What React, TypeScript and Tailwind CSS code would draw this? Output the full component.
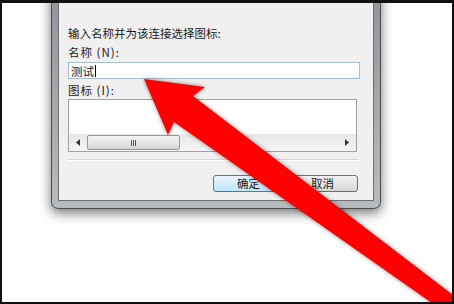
import React from "react";

const font = "font-['Noto_Sans_CJK_SC','Noto_Sans',sans-serif]";

const Arrow: React.FC = () => (
  <svg
    className="absolute inset-0 drop-shadow-[0_0_2px_rgba(0,0,0,0.45)]"
    width={454}
    height={304}
    viewBox="0 0 454 304"
  >
    <polygon
      points="144,79 205,87 193,96 470,308 439,308 174,122 168,135"
      fill="#ff0000"
    />
  </svg>
);

const ScrollBar: React.FC = () => (
  <div className="flex h-[17px] items-center bg-gradient-to-b from-[#e8e8e8] to-[#f4f4f4]">
    <div className="flex w-[18px] justify-center">
      <svg width="4" height="7" viewBox="0 0 4 7">
        <polygon points="4,0 4,7 0,3.5" fill="#333" />
      </svg>
    </div>
    <div className="flex h-[15px] w-[93px] items-center justify-center rounded-[2px] border border-[#979797] bg-gradient-to-b from-[#f3f3f3] via-[#e6e6e6] to-[#d4d4d4]">
      <div className="flex gap-[1px]">
        <span className="h-[6px] w-px bg-[#555]" />
        <span className="h-[6px] w-px bg-[#555]" />
        <span className="h-[6px] w-px bg-[#555]" />
      </div>
    </div>
    <div className="flex-grow" />
    <div className="flex w-[18px] justify-center">
      <svg width="4" height="7" viewBox="0 0 4 7">
        <polygon points="0,0 0,7 4,3.5" fill="#333" />
      </svg>
    </div>
  </div>
);

const App: React.FC = () => {
  return (
    <div className={`relative h-[304px] w-[454px] overflow-hidden bg-white ${font}`}>
      {/* dialog, its top is outside the picture */}
      <div className="ml-[51px] mt-[-9px] w-[330px] rounded-b-[7px] border border-t-0 border-[#4d4d4d] bg-gradient-to-b from-[#8f959b] to-[#b8bbbe] px-[6px] pb-[7px] shadow-[0_4px_12px_rgba(0,0,0,0.55)]">
        <div className="flex flex-col border border-t-0 border-[#707070] bg-[#f0f0f0] pl-[9px] text-[11.5px] leading-[16px] text-[#1a1a1a]">
          <div className="ml-[40px] mt-[-3px] text-[#9a9a9a]">新建连接名称</div>
          <div className="mt-[21px]">输入名称并为该连接选择图标:</div>
          <div className="mt-[3px] tracking-[1px]">名称 (N):</div>
          <div className="mt-[2px] flex h-[17px] w-[292px] items-center border border-[#abbdcd] bg-[#fbfdff] pl-[2px]">
            <span>测试</span>
            <span className="ml-px h-[12px] w-px bg-black" />
          </div>
          <div className="mt-[3px] tracking-[1px]">图标 (I):</div>
          <div className="mt-px flex h-[53px] w-[289px] flex-col border border-[#a0a0a0] bg-white">
            <div className="flex-grow" />
            <ScrollBar />
          </div>
          <div className="mt-[7px] h-[2px] w-[290px] border-t border-b border-t-[#d5d5d5] border-b-white" />
          <div className="mt-[14px] mb-[8px] flex w-[290px] justify-end gap-[3px]">
            <button className="h-[17px] w-[71px] rounded-[3px] border border-[#3c7fb1] bg-gradient-to-b from-[#eaf6fd] to-[#bee6fd] text-[11.5px] leading-[15px] text-[#1a1a1a]">
              确定
            </button>
            <button className="h-[17px] w-[71px] rounded-[3px] border border-[#707070] bg-gradient-to-b from-[#f2f2f2] to-[#d6d6d6] text-[11.5px] leading-[15px] text-[#1a1a1a]">
              取消
            </button>
          </div>
        </div>
      </div>

      <Arrow />

      {/* black picture frame */}
      <div className="pointer-events-none absolute inset-0 border-t-[3px] border-r-2 border-b-2 border-l-2 border-[#111]" />
    </div>
  );
};

export default App;
